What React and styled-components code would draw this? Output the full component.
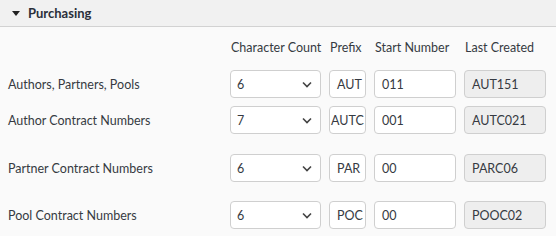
import React from "react";
import styled, { createGlobalStyle } from "styled-components";

const Global = createGlobalStyle`
  body {
    margin: 0;
    background: #fafafa;
    font-family: Lato, "Noto Sans", sans-serif;
    color: #363a42;
  }
`;

const rows = [
  { label: "Authors, Partners, Pools", count: "6", prefix: "AUT", start: "011", last: "AUT151", gap: 13 },
  { label: "Author Contract Numbers", count: "7", prefix: "AUTC", start: "001", last: "AUTC021", gap: 8, tight: true },
  { label: "Partner Contract Numbers", count: "6", prefix: "PAR", start: "00", last: "PARC06", gap: 20 },
  { label: "Pool Contract Numbers", count: "6", prefix: "POC", start: "00", last: "POOC02", gap: 19 },
];

export default function App() {
  return (
    <>
      <Global />
      <Section>
        <Header>
          <Caret />
          <Title>Purchasing</Title>
        </Header>
        <Body>
          <HeadRow>
            <span />
            <ColHead>Character Count</ColHead>
            <ColHead>Prefix</ColHead>
            <ColHead>Start Number</ColHead>
            <ColHead>Last Created</ColHead>
          </HeadRow>
          {rows.map((r) => (
            <Row key={r.label} $gap={r.gap}>
              <Label>{r.label}</Label>
              <Select>
                <span>{r.count}</span>
                <svg width="10" height="7" viewBox="0 0 10 7">
                  <path d="M1 1.5 L5 5.5 L9 1.5" fill="none" stroke="#444" strokeWidth="1.6" />
                </svg>
              </Select>
              <Field $tight={r.tight}>{r.prefix}</Field>
              <Field>{r.start}</Field>
              <Field $readonly>{r.last}</Field>
            </Row>
          ))}
        </Body>
      </Section>
    </>
  );
}

const Section = styled.div`
  width: 556px;
  height: 236px;
  overflow: hidden;
`;

const Header = styled.div`
  height: 26px;
  display: flex;
  align-items: center;
  padding-left: 12px;
  background: #f1f1f1;
  border-bottom: 1px solid #d2d2d2;
`;

const Caret = styled.span`
  width: 0;
  height: 0;
  border-left: 4px solid transparent;
  border-right: 4px solid transparent;
  border-top: 5px solid #222;
  margin-right: 8px;
  margin-top: 1px;
`;

const Title = styled.span`
  font-weight: 700;
  font-size: 13px;
  color: #2a2f3a;
`;

const Body = styled.div`
  padding: 10px 0 0 8px;
`;

const grid = `
  display: grid;
  grid-template-columns: 214px 91px 37px 82px 82px;
  column-gap: 8px;
  align-items: center;
`;

const HeadRow = styled.div`
  ${grid}
  height: 20px;
`;

const ColHead = styled.span`
  font-size: 12.5px;
  white-space: nowrap;
  margin-left: 1px;
`;

const Row = styled.div`
  ${grid}
  height: 28px;
  margin-top: ${(p) => p.$gap}px;
`;

const Label = styled.span`
  font-size: 12.5px;
  white-space: nowrap;
`;

const boxBase = `
  box-sizing: border-box;
  height: 28px;
  border: 1px solid #cfcfcf;
  border-radius: 4px;
  display: flex;
  align-items: center;
  font-size: 12.5px;
  white-space: nowrap;
  overflow: hidden;
`;

const Select = styled.div`
  ${boxBase}
  background: #fff;
  justify-content: space-between;
  padding: 0 8px 0 6px;
`;

const Field = styled.div`
  ${boxBase}
  background: ${(p) => (p.$readonly ? "#eeeeee" : "#fff")};
  padding: 0 ${(p) => (p.$tight ? "0 0 1px" : "7px")};
`;
